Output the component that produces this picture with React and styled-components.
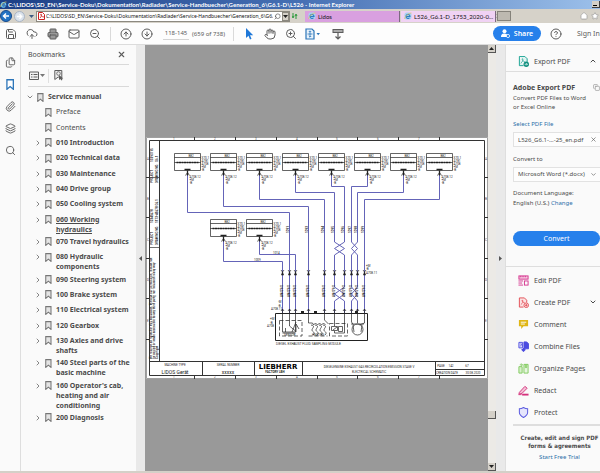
import React from "react";
import styled, { createGlobalStyle, css } from "styled-components";
import {
  ChevronDown,
  ChevronRight,
  ChevronUp,
  CircleArrowDown,
  CircleArrowUp,
  CircleQuestionMark,
  CloudUpload,
  Copy,
  Files,
  Hand,
  House,
  Layers,
  Mail,
  Paperclip,
  Printer,
  Save,
  Search,
  Star,
  X,
  ZoomIn,
  ZoomOut,
} from "lucide-react";

const GlobalStyle = createGlobalStyle`
  * {
    box-sizing: border-box;
  }
  body {
    margin: 0;
    overflow: hidden;
    font-family: "Noto Sans", "Open Sans", sans-serif;
    font-size: 7px;
    color: #4b4b4b;
  }
  button, input, select {
    font: inherit;
    color: inherit;
    margin: 0;
    padding: 0;
    border: 0;
    background: none;
  }
  button {
    cursor: pointer;
  }
  svg {
    display: block;
    flex: none;
  }
`;

const Window = styled.div`
  height: 100vh;
  display: flex;
  flex-direction: column;
  overflow: hidden;
  background-color: #fafafa;
  border-bottom: 2px solid #d4d0c8;
`;

/* browser chrome */
const TitleBar = styled.header`
  flex: none;
  height: 9px;
  display: flex;
  align-items: center;
  justify-content: space-between;
  background: linear-gradient(90deg, #1c3f86 0%, #4670b4 50%, #9cc0ea 100%);
  color: #fff;
  white-space: nowrap;
  font-family: Lato, sans-serif;
  font-weight: 700;
  font-size: 6px;
  line-height: 8px;
`;
const TitleText = styled.div`
  display: flex;
  align-items: center;
  gap: 1px;
`;
const MinButton = styled.button`
  width: 8px;
  height: 7px;
  background-color: #d4d0c8;
  border-right: 1px solid #404040;
  border-bottom: 1px solid #404040;
  display: flex;
  align-items: flex-end;
  padding: 1px;
  &::before {
    content: "";
    width: 4px;
    height: 1px;
    background-color: #000;
  }
`;
const AddressBar = styled.nav`
  flex: none;
  height: 14px;
  display: flex;
  align-items: center;
  padding-right: 1px;
  background-color: #d6d2c9;
  font-family: Lato, sans-serif;
  font-size: 6px;
  color: #111;
`;
const NavButton = styled.button`
  width: ${props => (props.$main ? 12 : 11)}px;
  height: ${props => (props.$main ? 12 : 11)}px;
  margin-right: 2px;
  border-radius: 50%;
  border: 1px solid ${props => (props.$main ? "#174a8c" : "#a8b4c4")};
  background-color: ${props => (props.$main ? "#2273c4" : "#dbe3ec")};
  display: flex;
  align-items: center;
  justify-content: center;
`;
const CaretButton = styled.button`
  width: 9px;
  height: 10px;
  display: flex;
  align-items: center;
  justify-content: center;
  margin-right: ${props => props.$gap || 0}px;
`;
const Location = styled.div`
  width: 254px;
  height: 11px;
  display: flex;
  align-items: center;
  gap: 1px;
  padding-left: 1px;
  background-color: #fff;
  border: 1px solid #8c8980;
`;
const LocationInput = styled.input`
  flex: 1;
  min-width: 0;
  height: 9px;
  font-family: "Noto Sans", sans-serif;
  font-size: 5px;
`;
const DropButton = styled.button`
  width: 7px;
  height: 9px;
  display: flex;
  align-items: center;
  justify-content: center;
  background-color: #d4d0c8;
  border: 1px solid #8c8980;
`;
const Tab = styled.a`
  width: 95px;
  height: 11px;
  margin-right: 1px;
  padding: 0 2px 0 3px;
  display: flex;
  align-items: center;
  gap: 2px;
  color: #111;
  text-decoration: none;
  white-space: nowrap;
  border-right: 1px solid #7c6a80;
  background-color: ${props => (props.$active ? "#f0d2f4" : "#d9a0e0")};
  span {
    flex: 1;
  }
`;
const NewTab = styled.button`
  width: 14px;
  height: 10px;
  background-color: #bdb9b0;
  border: 1px solid #85827a;
`;
const Spacer = styled.div`
  flex: 1;
`;

/* reader toolbar */
const Toolbar = styled.div`
  flex: none;
  height: 22px;
  padding-left: 5px;
  display: flex;
  align-items: center;
  color: #5c5c5c;
  background-color: #fdfdfd;
  border-bottom: 1px solid #dcdcdc;
`;
const ToolGroup = styled.div`
  display: flex;
  align-items: center;
  gap: 9px;
`;
const IconButton = styled.button`
  width: 12px;
  height: 12px;
  display: flex;
  align-items: center;
  justify-content: center;
  color: ${props => props.$color || "#5c5c5c"};
`;
const ReadMode = styled(IconButton)`
  margin-left: 5px;
`;
const Separator = styled.span`
  width: 1px;
  height: 14px;
  margin: 0 9px;
  background-color: #dadada;
`;
const PageInput = styled.input`
  width: 26px;
  height: 13px;
  margin-left: 10px;
  text-align: center;
  font-size: 6px;
  border-bottom: 1px solid #d4d4d4;
`;
const PageCount = styled.span`
  margin-left: 3px;
  width: 32px;
  font-size: 6px;
  white-space: nowrap;
`;
const ShareButton = styled.button`
  width: 48px;
  height: 15px;
  border-radius: 8px;
  display: flex;
  align-items: center;
  justify-content: center;
  gap: 4px;
  color: #fff;
  font-weight: 600;
  background-color: #2680eb;
`;
const SignIn = styled.button`
  width: 23px;
  margin-left: 15px;
  text-align: left;
  white-space: nowrap;
`;

/* body */
const Body = styled.div`
  flex: 1;
  min-height: 0;
  display: flex;
`;
const Rail = styled.nav`
  flex: none;
  width: 21px;
  padding-top: 11px;
  display: flex;
  flex-direction: column;
  align-items: center;
  gap: 10px;
  border-right: 1px solid #dedede;
`;
const Bookmarks = styled.aside`
  flex: none;
  width: 115px;
  display: flex;
  flex-direction: column;
`;
const PanelHead = styled.div`
  height: 20px;
  margin: 0 7px;
  padding-right: 2px;
  display: flex;
  align-items: center;
  justify-content: space-between;
  border-bottom: 1px solid #d9d9d9;
`;
const PanelTitle = styled.h2`
  margin: 0;
  font-size: 7px;
  font-weight: 400;
`;
const PanelTools = styled.div`
  height: 22px;
  margin: 0 7px;
  display: flex;
  align-items: center;
  border-bottom: 1px solid #d9d9d9;
`;
const ToolsDivider = styled.span`
  width: 1px;
  height: 14px;
  margin: 0 4px 0 3px;
  background-color: #e0e0e0;
`;
const BookmarkList = styled.ul`
  flex: 1;
  margin: 0;
  padding: 5px 0 43px 5px;
  list-style: none;
  display: flex;
  flex-direction: column;
  justify-content: space-between;
`;
const BookmarkRow = styled.li`
  min-height: 15px;
  padding: 0 0 2px ${props => props.$level * 8}px;
  display: flex;
  align-items: flex-start;
`;
const Toggle = styled.button`
  width: 8px;
  height: 10px;
  display: flex;
  align-items: center;
  justify-content: center;
`;
const BookmarkIcon = styled.span`
  width: 14px;
  height: 10px;
  padding-left: 3px;
  display: flex;
  align-items: center;
`;
const BookmarkLink = styled.a`
  flex: 1;
  color: #4b4b4b;
  font-size: 7px;
  line-height: 10px;
  text-decoration: none;
  ${props =>
    props.$bold &&
    css`
      font-weight: 700;
    `}
  ${props =>
    props.$current &&
    css`
      text-decoration: underline;
    `}
`;
const Gutter = styled.button`
  flex: none;
  width: 9px;
  display: flex;
  align-items: center;
  justify-content: center;
  background-color: #e9e9e9;
`;
const Viewer = styled.main`
  flex: 1;
  min-width: 0;
  display: flex;
  align-items: center;
  background-color: #999;
`;
const Sheet = styled.div`
  flex: 1;
  padding-left: 1px;
  svg {
    width: 100%;
    height: auto;
  }
`;
const ScrollTrack = styled.div`
  flex: none;
  width: 8px;
  display: flex;
  flex-direction: column;
  justify-content: flex-end;
  background-color: #eceae6;
`;
const ScrollButton = styled.button`
  height: 8px;
  display: flex;
  align-items: center;
  justify-content: center;
  background-color: #d4d0c8;
  border-right: 1px solid #555;
  border-bottom: 1px solid #555;
`;
const Thumb = styled.div`
  height: 8px;
  margin: auto 0 44px;
  background-color: #d4d0c8;
  border-right: 1px solid #555;
  border-bottom: 1px solid #555;
`;

/* tools pane */
const ToolsPane = styled.aside`
  flex: none;
  width: 95px;
  overflow: hidden;
  display: flex;
  flex-direction: column;
  border-left: 1px solid #dedede;
`;
const ExportHead = styled.div`
  height: 27px;
  padding: 6px 3px 0 12px;
  display: flex;
  align-items: center;
  gap: 5px;
  border-bottom: 1px solid #dedede;
`;
const ExportForm = styled.form`
  height: 195px;
  padding: 8px 0 0 7px;
  display: flex;
  flex-direction: column;
  font-size: 6px;
  line-height: 9px;
  border-bottom: 1px solid #dedede;
`;
const ExportTitle = styled.div`
  height: 14px;
  display: flex;
  justify-content: space-between;
  align-items: center;
  white-space: nowrap;
  h3 {
    margin: 0;
    font-size: 7px;
  }
`;
const Text = styled.p`
  margin: 0;
  padding-top: ${props => props.$gap || 0}px;
`;
const Blurb = styled(Text)`
  padding-right: 12px;
`;
const FieldLabel = styled.label`
  padding: 8px 0 3px;
  color: ${props => (props.$link ? "#2a6fa8" : "inherit")};
`;
const Field = styled.div`
  height: 15px;
  padding: 0 3px 0 4px;
  display: flex;
  align-items: center;
  background-color: #fdfdfd;
  border: 1px solid #e2e2e2;
  border-right: 0;
  input,
  select {
    flex: 1;
    min-width: 0;
    height: 13px;
    appearance: none;
  }
`;
const Link = styled.a`
  color: #2a6fa8;
  text-decoration: none;
`;
const ConvertButton = styled.button`
  flex: none;
  height: 15px;
  margin-top: 23px;
  color: #fff;
  font-size: 7px;
  border-radius: 8px;
  background-color: #2680eb;
`;
const ToolList = styled.ul`
  margin: 0 0 0 7px;
  padding: 2px 0 1px;
  list-style: none;
  border-bottom: 2px solid #dedede;
`;
const ToolItem = styled.li`
  height: 22px;
  padding: 0 3px 0 5px;
  display: flex;
  align-items: center;
  justify-content: space-between;
`;
const ToolButton = styled.button`
  display: flex;
  align-items: center;
  gap: 5px;
  white-space: nowrap;
`;
const Promo = styled.div`
  padding: 8px 0 0 13px;
  text-align: center;
  font-size: 6px;
  line-height: 8px;
  strong {
    display: block;
    font-family: "DejaVu Sans Condensed", sans-serif;
    font-size: 6px;
    padding-bottom: 3px;
  }
`;

const bookmarks = [
  { title: "Service manual", level: 0, open: true },
  { title: "Preface", level: 1, leaf: true },
  { title: "Contents", level: 1, leaf: true },
  { title: "010 Introduction", level: 1 },
  { title: "020 Technical data", level: 1 },
  { title: "030 Maintenance", level: 1 },
  { title: "040 Drive group", level: 1 },
  { title: "050 Cooling system", level: 1 },
  { title: "060 Working hydraulics", level: 1, current: true },
  { title: "070 Travel hydraulics", level: 1 },
  { title: "080 Hydraulic components", level: 1 },
  { title: "090 Steering system", level: 1 },
  { title: "100 Brake system", level: 1 },
  { title: "110 Electrical system", level: 1 },
  { title: "120 Gearbox", level: 1 },
  { title: "130 Axles and drive shafts", level: 1 },
  { title: "140 Steel parts of the basic machine", level: 1 },
  { title: "160 Operator's cab, heating and air conditioning", level: 1 },
  { title: "200 Diagnosis", level: 1 },
];

const Caret = ({ dir = "down", color = "#222" }) => {
  const points = {
    down: "0,1 5,1 2.5,4",
    up: "0,4 5,4 2.5,1",
    left: "4,0 4,5 1,2.5",
    right: "1,0 1,5 4,2.5",
  };
  return (
    <svg width="5" height="5" viewBox="0 0 5 5">
      <polygon points={points[dir]} fill={color} />
    </svg>
  );
};

const Ribbon = ({ size = 9, color = "#777", fill = "#e4e4e4" }) => (
  <svg width={size * 0.75} height={size} viewBox="0 0 9 12">
    <path d="M1 .8h7v10.4L4.5 8.2 1 11.2z" fill={fill} stroke={color} strokeWidth="1.4" />
  </svg>
);

const IeLogo = () => (
  <svg width="7" height="7" viewBox="0 0 14 14">
    <path d="M3 8h8.5A4.6 4.6 0 1 0 10.6 10.5" fill="none" stroke="#6cc6f2" strokeWidth="2.4" />
    <path d="M1 12C1 8 8 1 13 2" fill="none" stroke="#f3c94a" strokeWidth="1.3" />
  </svg>
);

const TabLogo = () => (
  <svg width="8" height="8" viewBox="0 0 16 16">
    <rect x="1" y="1" width="14" height="14" rx="4" fill="#a9d2f0" />
    <path d="M4 9h8A4 4 0 1 0 11 11.5" fill="none" stroke="#2c7cc4" strokeWidth="2.2" />
    <path d="M1 14C2 9 9 2 15 2" fill="none" stroke="#e8c45a" strokeWidth="1.4" />
  </svg>
);

const toolIcons = {
  export: (
    <g>
      <path d="M3 1h12l5 5v7M3 1v20h9" fill="#dff3f0" stroke="#12a08f" strokeWidth="2" />
      <path d="M6 16c4-3 6-8 4-10s-2 5 6 7" fill="none" stroke="#12a08f" strokeWidth="1.5" />
      <circle cx="18" cy="18" r="6" fill="#12907f" />
      <path d="M14.5 18h6m-2.5-2.5 2.5 2.5-2.5 2.5" stroke="#fff" strokeWidth="1.5" fill="none" />
    </g>
  ),
  edit: (
    <g fill="none" stroke="#d4318c" strokeWidth="2">
      <rect x="2" y="2" width="20" height="7" fill="#f6c6df" />
      <path d="M6 2v3M11 2v3M16 2v3" />
      <path d="M1 13h10M1 17.5h8M1 22h10" />
      <rect x="14" y="13" width="8" height="9" />
    </g>
  ),
  create: (
    <g fill="none" stroke="#e34850" strokeWidth="2">
      <path d="M12 22H3V2h11l5 5v5" fill="#fbe2e3" />
      <path d="M6 17c4-3 6-8 4-10s-2 5 5 6" strokeWidth="1.5" />
      <circle cx="18" cy="18" r="5" fill="#fff" />
      <path d="M18 15v6M15 18h6" />
    </g>
  ),
  comment: (
    <g>
      <path d="M2 2h20v14H12l-5 6v-6H2z" fill="#e0b614" />
      <path d="M6 7h12M6 11h9" stroke="#fff" strokeWidth="2" />
    </g>
  ),
  combine: (
    <g fill="none" stroke="#4b4be0" strokeWidth="2">
      <path d="M2 3h8v12H2z" fill="#dcdcfb" />
      <path d="M13 2h6l4 4v11H13z" fill="#4b4be0" />
      <path d="M4 12c3-2 4-4 3-6s-1 3 3 4" strokeWidth="1.3" />
      <path d="M12 15v7m-4-4 4 4 4-4" strokeWidth="3" />
    </g>
  ),
  organize: (
    <g fill="none" stroke="#7fc95c" strokeWidth="2">
      <path d="M2 8h7v14H2z" fill="#d8f0cb" />
      <path d="M13 3h9v19h-9z" fill="#e7f6df" />
      <path d="M4 4h5M7 1l3 3-3 3M16 3v7h3V3" />
    </g>
  ),
  redact: (
    <g fill="none" stroke="#d4317c" strokeWidth="2">
      <path d="M3 16 15 3l5 4L9 18l-7 2z" fill="#f3bfd6" />
      <path d="M9 21h14" strokeWidth="4" />
      <path d="M1 21h7" />
    </g>
  ),
  protect: (
    <path d="M12 1c3 2 6 3 9 3v8c0 5-4 8-9 11-5-3-9-6-9-11V4c3 0 6-1 9-3z" fill="#e6e6fc" stroke="#5c5ce0" strokeWidth="2.2" />
  ),
};

const ToolIcon = ({ name }) => (
  <svg width="11" height="11" viewBox="0 0 24 24">
    {toolIcons[name]}
  </svg>
);

const tools = [
  { name: "edit", label: "Edit PDF" },
  { name: "create", label: "Create PDF", expandable: true },
  { name: "comment", label: "Comment" },
  { name: "combine", label: "Combine Files" },
  { name: "organize", label: "Organize Pages" },
  { name: "redact", label: "Redact" },
  { name: "protect", label: "Protect" },
];

/* wiring diagram, in sheet coordinates */
const sensors = [
  { x: 174.5, y: 153.5 },
  { x: 210.5, y: 153.5 },
  { x: 246.5, y: 153.5 },
  { x: 282.5, y: 153.5 },
  { x: 318.5, y: 153.5 },
  { x: 354.5, y: 153.5 },
  { x: 390.5, y: 153.5 },
  { x: 426.5, y: 153.5 },
  { x: 210.5, y: 219.5 },
  { x: 246.5, y: 219.5 },
];
const wires = [
  "M187.5 172V212.5H289.5V313",
  "M223.5 172V206.5H308.5V313",
  "M259.5 172V199.5H324.5V313",
  "M295.5 172V192.5H334.5V242L344.5 248.5L334.5 255V287L344.5 294L334.5 301V313",
  "M331.5 172V186.5H344.5V242L334.5 248.5L344.5 255V287L334.5 294L344.5 301V313",
  "M367.5 172V186.5H351.5V242L357.5 248.5L351.5 255V287L357.5 294L351.5 301V313",
  "M403.5 172V192.5H357.5V242L351.5 248.5L357.5 255V287L351.5 294L357.5 301V313",
  "M439.5 172V199.5H364.5V313",
  "M223.5 238V261.5H282.5V313",
  "M259.5 238V254.5H295.5V313",
];
const drops = [282.5, 289.5, 295.5, 308.5, 324.5, 334.5, 344.5, 351.5, 357.5, 364.5];
const rowTicks = [177, 217, 258, 298, 339];
const columnTicks = [194, 235, 276, 317, 357, 398, 439];
const sideNotes = [
  [153, 162, "13290715"],
  [158, 162, "G6.1"],
  [153, 183, "PROJECT"],
  [158, 183, "DRAWING NO."],
  [153, 223, "12345678"],
  [158, 223, "1173-45678 G6.1"],
  [153, 245, "PROJECT"],
  [158, 245, "DRAWING NO."],
];

const Sensor = ({ x, y }) => (
  <g>
    <path d={`M${x} ${y}h26v17h-26zM${x} ${y + 4}h26M${x} ${y + 9}h26`} />
    <path d={`M${x + 2} ${y + 9}h22`} strokeWidth="1.5" strokeDasharray="2 .5" />
    <path d={`M${x + 10} ${y + 16}h6M${x + 13} ${y + 17}v5`} strokeWidth="1.3" />
    <path d={`M${x + 11} ${y + 22}l2-3 2 3`} />
    <g fill="#222" stroke="none" fontSize="3">
      <text x={x + 14} y={y + 3}>B82</text>
      <text x={x + 27} y={y + 5}>X70.1</text>
      <text x={x + 27} y={y + 8}>A781</text>
      <text x={x + 27} y={y + 11}>A708</text>
      <text x={x + 27} y={y + 14}>+M</text>
      <text x={x + 27} y={y + 17}>-B</text>
      <text x={x + 15} y={y + 24}>A708.12</text>
      <text x={x + 15} y={y + 27}>+M</text>
      <text x={x + 15} y={y + 30}>-B</text>
    </g>
  </g>
);

const Schematic = () => (
  <svg viewBox="146 137 342 242" role="img" aria-label="Electrical schematic" fontFamily="Roboto, sans-serif">
    <rect x="146" y="137" width="342" height="242" fill="#fff" />
    <g fill="none" stroke="#333" strokeWidth=".7">
      <path d="M146.5 137.5h341v241h-341z" stroke="#777" />
      <path d="M149.5 140.5H484.5V375.5H149.5zM159.5 140.5V361.5M149.5 361.5H484.5" strokeWidth="1" />
      {rowTicks.map(y => (
        <path key={y} d={`M146 ${y}.5h3M484 ${y}.5h4`} strokeWidth="1" />
      ))}
      {columnTicks.map(x => (
        <path key={x} d={`M${x}.5 137v4M${x}.5 375v4`} strokeWidth="1" />
      ))}
      <path d="M150 177.5h9M150 247.5h9" />
      <path d="M202.5 361.5v14M254.5 361.5v14M302.5 361.5v14M435.5 361.5v14M435.5 369.5h49" strokeWidth="1" />
    </g>
    <g fill="#444" fontSize="3">
      {rowTicks.map((y, i) => (
        <React.Fragment key={y}>
          <text x="147" y={y - 17}>{"ABCDE"[i]}</text>
          <text x="485" y={y - 17}>{"ABCDE"[i]}</text>
        </React.Fragment>
      ))}
      {columnTicks.map((x, i) => (
        <React.Fragment key={x}>
          <text x={x - 21} y="140">{i + 1}</text>
          <text x={x - 21} y="378">{i + 1}</text>
        </React.Fragment>
      ))}
    </g>
    <g fill="#222" fontSize="3" fontWeight="700">
      {sideNotes.map(([x, y, note]) => (
        <text key={`${x}-${y}`} transform={`translate(${x} ${y}) rotate(-90)`}>{note}</text>
      ))}
      <text transform="translate(152 359) rotate(-90)">We reserve all rights for this document. Without our permission, it must not</text>
      <text transform="translate(155 359) rotate(-90)">be copied or made accessible to any third party, nor misused in any way</text>
      <text transform="translate(158 359) rotate(-90)">Copyright</text>
    </g>
    <g fill="none" stroke="#6464b8" strokeWidth="1">
      {wires.map(d => (
        <path key={d} d={d} />
      ))}
    </g>
    <g fill="none" stroke="#222" strokeWidth=".7">
      {sensors.map(s => (
        <Sensor key={`${s.x}-${s.y}`} {...s} />
      ))}
      {drops.map(x => (
        <g key={x}>
          <path d={`M${x - 1} 275l1-3 1 3zM${x} 309v5`} fill="#222" />
          <path d={`M${x - 1.5} 270l1.5 2 1.5-2M${x - 1.5} 311l1.5-2 1.5 2`} />
        </g>
      ))}
      <path d="M275.5 313.5H367.5V340.5H275.5z" strokeWidth="1" />
      <path d="M301 312h3M314 312h3M355 312h3" strokeWidth="2" />
      <path d="M279.5 320.5H302V336H279.5zM308.5 336h19M329.5 323.5H347.5V336H329.5z" strokeDasharray="4 2" />
      <path d="M282.5 314v18h13V314M289.5 314v12l6 5M285.5 328v4M292 332l4-10M296 332v-8l3 5M282.5 333h13" />
      <path d="M308.5 314v9h4l1 2 2-2 2 2 2-2 2 2 2-2 2 2M324.5 314v6l4 4M311 325c5 1 1 3 1 5s4 2 1 5M315 325c5 1 1 3 1 5s4 2 1 5M319 325c5 1 1 3 1 5s4 2 1 5M323 325c5 1 1 3 1 5s4 2 1 5" />
      <path d="M334.5 314v12M331.5 326.5h6v4h-6zM333 330l4-3M338.5 326.5h4v5h-4zM344.5 314v19h-10v-2" />
      <path d="M351.5 314v8l2 3M364.5 314v9l-5 2M357.5 314v9M351 324h13M353 325l1 7M362 325l-1 7" />
      <circle cx="357.5" cy="329.5" r="5.5" />
    </g>
    <g fill="#222" fontSize="3">
      {drops.map((x, i) => (
        <g key={x}>
          {i > 0 && i !== 2 && <text transform={`translate(${x - 1} 233) rotate(-90)`} fontWeight="700">{`109${i}`}</text>}
          <text transform={`translate(${x} 297) rotate(-90)`} fontWeight="700">AN/GY/0</text>
        </g>
      ))}
      <text x="254" y="261">1009</text>
      <text x="273" y="254">1014</text>
      <text x="271" y="310">A708.11</text>
      <text x="278" y="303">-M</text>
      <text x="278" y="307">-B</text>
      <text x="267" y="327">A708</text>
      <text x="270" y="320">+M</text>
      <text x="270" y="324">-B</text>
      <text x="366" y="267">+M</text>
      <text x="366" y="270">-B</text>
      <text x="366" y="274">A708.11</text>
      <text x="284" y="336">SENSOR</text>
      <text x="312" y="336">HEATING</text>
      <text x="276" y="345" fontFamily="Liberation Sans">DIESEL EXHAUST FLUID SAMPLING MODULE</text>
    </g>
    <g fill="#222" fontSize="3" textAnchor="middle">
      <text x="175" y="366">MACHINE TYPE</text>
      <text x="175" y="374" fontSize="5">LIDOS Gerät</text>
      <text x="228" y="366">SERIAL NUMBER</text>
      <text x="228" y="374" fontSize="5">xxxxx</text>
      <text x="278" y="369" fontSize="7" fontWeight="700" fontFamily="DejaVu Sans" fill="#000">LIEBHERR</text>
      <text x="275" y="373" fontWeight="700">FACTORY LBH</text>
      <text x="369" y="368">DIESELENGINE EXHAUST GAS RECIRCULATION EMISSION STAGE V</text>
      <text x="369" y="373">ELECTRICAL SCHEMATIC</text>
      <text x="441" y="367">PAGE</text>
      <text x="451" y="367">142</text>
      <text x="467" y="367">67</text>
      <text x="447" y="374">CREATION DATE</text>
      <text x="473" y="374">30.08.2020</text>
    </g>
  </svg>
);

const App = () => {
  return (
    <Window>
      <GlobalStyle />
      <TitleBar>
        <TitleText>
          <IeLogo />
          C:\LIDOS\SD_EN\Service-Doku\Dokumentation\Radlader\Service-Handbuecher\Generation_6\G6.1-D\L526 - Internet Explorer
        </TitleText>
        <MinButton aria-label="Minimize" />
      </TitleBar>
      <AddressBar>
        <NavButton $main aria-label="Back">
          <svg width="8" height="8" viewBox="0 0 8 8">
            <path d="M7 4H1.5M4 1.5 1.5 4 4 6.5" fill="none" stroke="#fff" strokeWidth="1.5" />
          </svg>
        </NavButton>
        <NavButton aria-label="Forward">
          <svg width="7" height="7" viewBox="0 0 8 8">
            <path d="M1 4h5.5M4 1.5 6.5 4 4 6.5" fill="none" stroke="#fff" strokeWidth="1.5" />
          </svg>
        </NavButton>
        <CaretButton aria-label="Recent pages">
          <Caret color="#3c5a82" />
        </CaretButton>
        <Location>
          <svg width="7" height="8" viewBox="0 0 7 8">
            <path d="M.5.5h4l2 2v5h-6z" fill="#fff" stroke="#c22" />
            <path d="M2 6c2-2 2-4 1-4s0 3 3 3" fill="none" stroke="#c22" strokeWidth=".8" />
          </svg>
          <LocationInput aria-label="Address" defaultValue="C:\LIDOS\SD_EN\Service-Doku\Dokumentation\Radlader\Service-Handbuecher\Generation_6\G6." />
          <Search size={7} color="#444" transform="scale(-1 1)" />
          <DropButton aria-label="Show addresses">
            <Caret />
          </DropButton>
        </Location>
        <CaretButton $gap={6} aria-label="Refresh">
          <svg width="6" height="6" viewBox="0 0 6 6">
            <path d="M1 0v4M0 3l1 2 1-2M4 6V2M3 3l1-2 1 2" fill="none" stroke="#2c9a3c" />
          </svg>
        </CaretButton>
        <Tab href="#lidos">
          <TabLogo />
          <span>Lidos</span>
        </Tab>
        <Tab href="#l526" $active>
          <TabLogo />
          <span>L526_G6.1-D_1753_2020-0...</span>
          <X size={6} color="#777" />
        </Tab>
        <NewTab aria-label="New tab" />
        <Spacer />
        <CaretButton $gap={2} aria-label="Home">
          <House size={8} stroke="#999" fill="#fff" />
        </CaretButton>
        <CaretButton aria-label="Favorites">
          <Star size={8} stroke="#999" fill="#fff" />
        </CaretButton>
      </AddressBar>

      <Toolbar>
        <ToolGroup>
          <IconButton aria-label="Save"><Save size={12} /></IconButton>
          <IconButton aria-label="Upload"><CloudUpload size={12} /></IconButton>
          <IconButton aria-label="Print"><Printer size={12} fill="#999" /></IconButton>
          <IconButton aria-label="Send"><Mail size={12} /></IconButton>
          <IconButton aria-label="Find"><ZoomOut size={12} /></IconButton>
        </ToolGroup>
        <Separator />
        <ToolGroup>
          <IconButton aria-label="Previous page"><CircleArrowUp size={12} /></IconButton>
          <IconButton aria-label="Next page"><CircleArrowDown size={12} /></IconButton>
        </ToolGroup>
        <PageInput aria-label="Page" defaultValue="118-145" />
        <PageCount>(659 of 738)</PageCount>
        <Separator />
        <ToolGroup>
          <IconButton aria-label="Select" $color="#1f78d8">
            <svg width="10" height="12" viewBox="0 0 10 12">
              <path d="M2 0v10l2.5-2.2L6 11.5l1.5-.7L6 7.2h3.2z" fill="currentColor" />
            </svg>
          </IconButton>
          <IconButton aria-label="Pan"><Hand size={12} /></IconButton>
          <IconButton aria-label="Zoom in"><ZoomIn size={12} /></IconButton>
          <IconButton aria-label="Fit page" $color="#2a74b8">
            <svg width="16" height="12" viewBox="0 0 16 12">
              <path d="M2 1h6l2 2v8H2z" fill="#e8f2fb" stroke="currentColor" strokeWidth="1.2" />
              <path d="M6 3v6M3.5 6h5M4.8 4 6 2.8 7.2 4M4.8 8 6 9.2 7.2 8" fill="none" stroke="currentColor" strokeWidth=".8" />
              <path d="M12.5 5H16l-1.8 2.2z" fill="currentColor" />
            </svg>
          </IconButton>
          <ReadMode aria-label="Read mode">
            <svg width="12" height="12" viewBox="0 0 12 12">
              <rect x="1" y="1.5" width="10" height="3" fill="#aaa" stroke="currentColor" />
              <path d="M6 5v6M3.5 8.5 6 11l2.5-2.5" fill="none" stroke="currentColor" strokeWidth="1.2" />
            </svg>
          </ReadMode>
        </ToolGroup>
        <Spacer />
        <ToolGroup>
          <ShareButton>
            <svg width="9" height="9" viewBox="0 0 9 9">
              <circle cx="3.5" cy="2.2" r="2" fill="#fff" />
              <path d="M0 8c0-3 1.5-3.6 3.5-3.6S6.5 5 6.5 8z" fill="#fff" />
              <circle cx="7" cy="7" r="1.6" fill="#2680eb" stroke="#fff" strokeWidth=".8" />
            </svg>
            Share
          </ShareButton>
          <IconButton aria-label="Help"><CircleQuestionMark size={12} /></IconButton>
        </ToolGroup>
        <SignIn>Sign In</SignIn>
      </Toolbar>

      <Body>
        <Rail>
          <IconButton aria-label="Thumbnails"><Files size={11} /></IconButton>
          <IconButton aria-label="Bookmarks"><Ribbon size={11} color="#2a74b8" fill="#fff" /></IconButton>
          <IconButton aria-label="Attachments"><Paperclip size={11} /></IconButton>
          <IconButton aria-label="Layers"><Layers size={11} /></IconButton>
          <IconButton aria-label="Search"><Search size={11} /></IconButton>
        </Rail>

        <Bookmarks>
          <PanelHead>
            <PanelTitle>Bookmarks</PanelTitle>
            <IconButton aria-label="Close bookmarks"><X size={9} strokeWidth={3} /></IconButton>
          </PanelHead>
          <PanelTools>
            <IconButton aria-label="Options">
              <svg width="11" height="10" viewBox="0 0 11 10">
                <path d="M.5 1h9v7.5h-9z" fill="#f2f2f2" stroke="currentColor" />
                <path d="M2 3.5h1.5M4.5 3.5h4M2 6h1.5M4.5 6h4" stroke="currentColor" />
              </svg>
            </IconButton>
            <Caret color="#777" />
            <ToolsDivider />
            <IconButton aria-label="Find current bookmark">
              <svg width="10" height="11" viewBox="0 0 10 11">
                <path d="M.8.5h7v9L4.3 7 .8 9.5z" fill="#eee" stroke="currentColor" />
                <circle cx="4.5" cy="3.5" r="1.8" fill="none" stroke="currentColor" strokeWidth=".8" />
                <path d="M5 5v5l1.5-1 1 1.5.8-.5-.8-1.5h1.8z" fill="currentColor" />
              </svg>
            </IconButton>
          </PanelTools>
          <BookmarkList>
            {bookmarks.map(item => (
              <BookmarkRow key={item.title} $level={item.level}>
                {item.leaf ? (
                  <Toggle as="span" />
                ) : (
                  <Toggle aria-label={item.open ? "Collapse" : "Expand"}>
                    {item.open ? <ChevronDown size={8} /> : <ChevronRight size={8} />}
                  </Toggle>
                )}
                <BookmarkIcon>
                  <Ribbon size={9} />
                </BookmarkIcon>
                <BookmarkLink href="#bookmark" $bold={!item.leaf} $current={item.current}>
                  {item.title}
                </BookmarkLink>
              </BookmarkRow>
            ))}
          </BookmarkList>
        </Bookmarks>
        <Gutter aria-label="Hide bookmarks"><Caret dir="left" color="#555" /></Gutter>

        <Viewer>
          <Sheet>
            <Schematic />
          </Sheet>
        </Viewer>
        <ScrollTrack>
          <ScrollButton aria-label="Scroll up"><Caret dir="up" /></ScrollButton>
          <Thumb />
          <ScrollButton aria-label="Scroll down"><Caret /></ScrollButton>
        </ScrollTrack>
        <Gutter aria-label="Hide tools"><Caret dir="right" color="#555" /></Gutter>

        <ToolsPane>
          <ExportHead>
            <ToolIcon name="export" />
            Export PDF
            <Spacer />
            <ChevronUp size={8} strokeWidth={3} />
          </ExportHead>
          <ExportForm onSubmit={e => e.preventDefault()}>
            <ExportTitle>
              <h3>Adobe Export PDF</h3>
              <Copy size={7} color="#888" />
            </ExportTitle>
            <Blurb>Convert PDF Files to Word or Excel Online</Blurb>
            <FieldLabel htmlFor="pdf-file" $link>Select PDF File</FieldLabel>
            <Field>
              <input id="pdf-file" defaultValue="L526_G6.1-...-25_en.pdf" />
              <X size={7} />
            </Field>
            <FieldLabel htmlFor="format">Convert to</FieldLabel>
            <Field>
              <select id="format">
                <option>Microsoft Word (*.docx)</option>
              </select>
              <ChevronDown size={7} />
            </Field>
            <Text $gap={7}>Document Language:</Text>
            <Text $gap={1}>
              English (U.S.) <Link href="#language">Change</Link>
            </Text>
            <ConvertButton type="submit">Convert</ConvertButton>
          </ExportForm>
          <ToolList>
            {tools.map(tool => (
              <ToolItem key={tool.name}>
                <ToolButton>
                  <ToolIcon name={tool.name} />
                  {tool.label}
                </ToolButton>
                {tool.expandable && <ChevronDown size={8} strokeWidth={3} />}
              </ToolItem>
            ))}
          </ToolList>
          <Promo>
            <strong>Create, edit and sign PDF forms &amp; agreements</strong>
            <Link href="#trial">Start Free Trial</Link>
          </Promo>
        </ToolsPane>
      </Body>
    </Window>
  );
};

export default App;
